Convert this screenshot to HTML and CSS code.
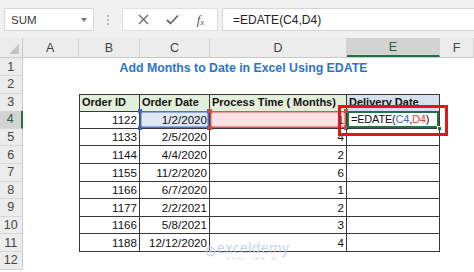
FILE: index.html
```html
<!DOCTYPE html>
<html lang="en">
<head>
    <meta charset="UTF-8">
    <title>Add Months to Date in Excel Using EDATE</title>
    <link rel="stylesheet" href="styles.css">
</head>
<body>
  <!-- Formula bar -->
  <div class="fbar">
    <div class="namebox">SUM <span class="caret"></span></div>
    <div class="grip"><i></i><i></i><i></i></div>
    <div class="tools">
      <svg width="11" height="11" viewBox="0 0 11 11"><path d="M1 1L10 10M10 1L1 10" stroke="#6a6a6a" stroke-width="1.4"/></svg>
      <svg width="13" height="11" viewBox="0 0 13 11"><path d="M1 6L4.5 9.5L12 1.5" stroke="#6a6a6a" stroke-width="1.8" fill="none"/></svg>
      <span class="fx">f<sub>x</sub></span>
    </div>
    <div class="formula">=EDATE(C4,D4)</div>
  </div>

  <!-- Sheet -->
  <div class="sheet">
    <div class="row colhead">
      <div class="corner"></div>
      <div>A</div><div>B</div><div>C</div><div>D</div><div class="sel">E</div><div>F</div>
    </div>

    <div class="row"><div class="rh">1</div>
      <div class="title">Add Months to Date in Excel Using EDATE</div>
    </div>
    <div class="row"><div class="rh">2</div></div>

    <div class="row"><div class="rh">3</div><div></div>
      <div class="t th first top">Order ID</div>
      <div class="t th top">Order Date</div>
      <div class="t th top">Process Time ( Months)</div>
      <div class="t th top blue">Delivery Date</div>
    </div>

    <div class="row"><div class="rh on">4</div><div></div>
      <div class="t n first">1122</div>
      <div class="t n refc">1/2/2020<b class="h tl"></b><b class="h tr"></b><b class="h bl"></b><b class="h br"></b></div>
      <div class="t n refd">1<b class="h tl"></b><b class="h tr"></b><b class="h bl"></b><b class="h br"></b></div>
      <div class="t act">=EDATE(<span class="c4">C4</span>,<span class="d4">D4</span>)<b class="fill"></b></div>
    </div>

    <div class="row"><div class="rh">5</div><div></div>
      <div class="t n first">1133</div><div class="t n">2/5/2020</div><div class="t n">4</div><div class="t"></div>
    </div>
    <div class="row"><div class="rh">6</div><div></div>
      <div class="t n first">1144</div><div class="t n">4/4/2020</div><div class="t n">2</div><div class="t"></div>
    </div>
    <div class="row"><div class="rh">7</div><div></div>
      <div class="t n first">1155</div><div class="t n">11/2/2020</div><div class="t n">6</div><div class="t"></div>
    </div>
    <div class="row"><div class="rh">8</div><div></div>
      <div class="t n first">1166</div><div class="t n">6/7/2020</div><div class="t n">1</div><div class="t"></div>
    </div>
    <div class="row"><div class="rh">9</div><div></div>
      <div class="t n first">1177</div><div class="t n">2/2/2021</div><div class="t n">2</div><div class="t"></div>
    </div>
    <div class="row"><div class="rh">10</div><div></div>
      <div class="t n first">1166</div><div class="t n">5/8/2021</div><div class="t n">3</div><div class="t"></div>
    </div>
    <div class="row"><div class="rh">11</div><div></div>
      <div class="t n first">1188</div><div class="t n">12/12/2020</div><div class="t n">4</div><div class="t"></div>
    </div>
    <div class="row"><div class="rh">12</div></div>

    <!-- red annotation box over E4 -->
    <div class="mark"></div>

    <!-- watermark -->
    <div class="wm">
      <svg width="11" height="11" viewBox="0 0 12 12"><circle cx="6" cy="6" r="4.5" fill="none" stroke="#c3cfe6" stroke-width="2"/><circle cx="6" cy="6" r="1.6" fill="#c3cfe6"/></svg>
      <div><span class="wm-name">exceldemy</span><span class="wm-sub">EXCEL · DATA · BI</span></div>
    </div>
  </div>
</body>
</html>
```

FILE: styles.css
```css
* {
    margin: 0;
    padding: 0;
    box-sizing: border-box;
}

body {
    width: 474px;
    height: 272px;
    overflow: hidden;
    background: #fff;
    font-family: "Liberation Sans", Arial, sans-serif;
    color: #111;
}

/* Formula bar */
.fbar {
    height: 38px;
    display: flex;
    align-items: flex-start;
    padding: 8px 0 0 4px;
    background: #f1f1f1;
}

.namebox {
    width: 90px;
    height: 23px;
    display: flex;
    align-items: center;
    justify-content: space-between;
    padding: 0 6px 0 6px;
    background: #fff;
    border: 1px solid #d6d6d6;
    font-size: 11.5px;
    color: #3a3a3a;
}

.caret {
    border-left: 3.5px solid transparent;
    border-right: 3.5px solid transparent;
    border-top: 4px solid #777;
}

.grip {
    width: 28px;
    height: 23px;
    display: flex;
    flex-direction: column;
    align-items: center;
    justify-content: center;
    gap: 2px;
}

.grip i {
    width: 2px;
    height: 2px;
    background: #b9b9b9;
}

.tools {
    width: 96px;
    height: 23px;
    display: flex;
    align-items: center;
    justify-content: space-around;
    padding: 0 4px 0 6px;
    background: #fff;
    border: 1px solid #e0e0e0;
}

.fx {
    font-family: "Liberation Serif", serif;
    font-style: italic;
    font-size: 13px;
    color: #555;
}

.fx sub {
    font-size: 9px;
    vertical-align: -1px;
}

.formula {
    flex: 1;
    height: 23px;
    margin-left: 4px;
    padding: 0 0 0 10px;
    display: flex;
    align-items: center;
    background: #fff;
    border: 1px solid #d6d6d6;
    border-right: none;
    font-size: 12px;
    color: #222;
}

/* Sheet grid */
.sheet {
    position: relative;
}

.row {
    display: grid;
    grid-template-columns: 22.5px 56.5px 61px 70px 137px 93px 1fr;
    height: 17.6px;
}

.colhead {
    height: 20.4px;
    background: #ececec;
    border-bottom: 1px solid #c9c9c9;
}

.colhead div {
    display: flex;
    align-items: center;
    justify-content: center;
    font-size: 12.5px;
    color: #444;
    border-right: 1px solid #d4d4d4;
}

.colhead .sel {
    background: #d3d3d3;
    border-bottom: 2px solid #217346;
    color: #2c5f3f;
}

.colhead .corner {
    position: relative;
    border-right: 1px solid #c9c9c9;
}

.corner::after {
    content: "";
    position: absolute;
    right: 3px;
    bottom: 3px;
    border-left: 10px solid transparent;
    border-bottom: 10px solid #c4c4c4;
}

.rh {
    display: flex;
    align-items: center;
    justify-content: center;
    background: #ececec;
    border-right: 1px solid #c9c9c9;
    border-bottom: 1px solid #d7d7d7;
    font-size: 12.5px;
    color: #444;
}

.rh.on {
    background: #d3d3d3;
    border-right: 2px solid #217346;
    color: #2c5f3f;
}

.title {
    grid-column: 4 / 6;
    display: flex;
    justify-content: center;
    align-items: flex-end;
    padding-bottom: 1px;
    white-space: nowrap;
    font-weight: bold;
    font-size: 12.3px;
    color: #2d74c4;
}

/* Table cells */
.t {
    position: relative;
    display: flex;
    align-items: flex-end;
    padding: 0 2px 1px 2px;
    border-right: 1px solid #383838;
    border-bottom: 1px solid #383838;
    font-size: 11.6px;
    line-height: 15px;
    white-space: nowrap;
}

.t.first {
    border-left: 1px solid #383838;
}

.t.top {
    border-top: 1px solid #383838;
}

.th {
    background: #e2efda;
    font-weight: bold;
    font-size: 11px;
}

.th.blue {
    background: #d6dfec;
}

.n {
    justify-content: flex-end;
}

.refc {
    background: #dfe7f3;
    box-shadow: inset 0 0 0 1.5px #4c72c9;
}

.refd {
    background: #f8e1e1;
    box-shadow: inset 0 0 0 1.5px #d9534f;
}

.h {
    position: absolute;
    width: 4px;
    height: 4px;
}

.refc .h {
    background: #3f67c2;
}

.refd .h {
    background: #d64545;
}

.tl { top: -2px; left: -2px; }
.tr { top: -2px; right: -2px; }
.bl { bottom: -2px; left: -2px; }
.br { bottom: -2px; right: -2px; }

.act {
    padding-left: 4px;
    font-size: 11px;
    letter-spacing: -0.2px;
    box-shadow: inset 0 0 0 2px #217346;
}

.c4 {
    color: #3f67c2;
}

.d4 {
    color: #d64545;
}

.fill {
    position: absolute;
    right: -3px;
    bottom: -3px;
    width: 5px;
    height: 5px;
    background: #217346;
    border: 1px solid #fff;
}

/* red annotation */
.mark {
    position: absolute;
    left: 338px;
    top: 67px;
    width: 110px;
    height: 31px;
    border: 3px solid #e3141b;
}

/* watermark */
.wm {
    position: absolute;
    left: 205px;
    top: 203px;
    display: flex;
    align-items: center;
    gap: 1px;
    opacity: 0.8;
}

.wm div {
    display: flex;
    flex-direction: column;
    gap: 3px;
}

.wm-name {
    font-family: "Open Sans", sans-serif;
    font-size: 14px;
    line-height: 13px;
    letter-spacing: 0.3px;
    color: #b9c7e2;
}

.wm-sub {
    font-size: 4px;
    line-height: 4px;
    letter-spacing: 1px;
    color: #c4cde0;
    padding-left: 10px;
}
```
